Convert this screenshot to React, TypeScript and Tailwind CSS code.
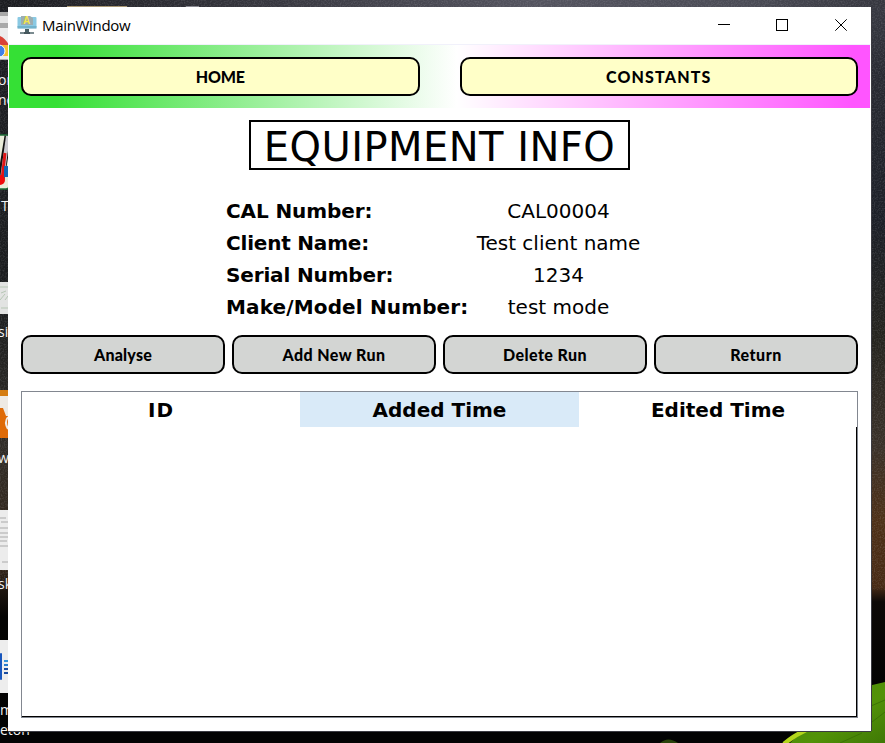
const sans = "font-['DejaVu_Sans','Liberation_Sans',sans-serif]";
const casual = "font-['Comic_Sans_MS','Lato',sans-serif]";

// Night-sky wallpaper with the shortcut column that peeks out behind the window.
function Desktop() {
  return (
    <svg className="absolute inset-0" width="885" height="743" viewBox="0 0 885 743" aria-hidden="true">
      <defs>
        <linearGradient id="topSky" x1="0" x2="1" y1="0" y2="0">
          <stop offset="0" stopColor="#1b1c20" />
          <stop offset="0.3" stopColor="#37373f" />
          <stop offset="0.6" stopColor="#54545f" />
          <stop offset="0.85" stopColor="#4a4b55" />
          <stop offset="1" stopColor="#35363e" />
        </linearGradient>
        <linearGradient id="rightSky" x1="0" x2="0" y1="0" y2="1">
          <stop offset="0" stopColor="#3a3b44" />
          <stop offset="0.1" stopColor="#292b33" />
          <stop offset="0.3" stopColor="#1c1f27" />
          <stop offset="0.45" stopColor="#25241f" />
          <stop offset="0.6" stopColor="#3a3129" />
          <stop offset="0.7" stopColor="#4e3017" />
          <stop offset="0.79" stopColor="#472a15" />
          <stop offset="0.81" stopColor="#0d0907" />
          <stop offset="0.92" stopColor="#030303" />
          <stop offset="1" stopColor="#030303" />
        </linearGradient>
        <linearGradient id="leftSky" x1="0" x2="0" y1="0" y2="1">
          <stop offset="0" stopColor="#1d1e23" />
          <stop offset="0.4" stopColor="#1b1d1f" />
          <stop offset="0.6" stopColor="#302c27" />
          <stop offset="0.76" stopColor="#35261a" />
          <stop offset="0.83" stopColor="#050403" />
          <stop offset="1" stopColor="#030303" />
        </linearGradient>
        <linearGradient id="leaf" x1="0" x2="1" y1="0" y2="1">
          <stop offset="0" stopColor="#4c8a08" />
          <stop offset="0.6" stopColor="#529208" />
          <stop offset="1" stopColor="#3f7806" />
        </linearGradient>
        <filter id="grain" x="0" y="0" width="1" height="1">
          <feTurbulence type="fractalNoise" baseFrequency="0.7" numOctaves="2" />
          <feColorMatrix values="0 0 0 0 0.7  0 0 0 0 0.7  0 0 0 0 0.75  0.9 0 0 0 -0.38" />
        </filter>
      </defs>
      <rect width="885" height="743" fill="#030303" />
      <rect width="12" height="743" fill="url(#leftSky)" />
      <rect x="868" width="17" height="743" fill="url(#rightSky)" />
      <rect width="885" height="8" fill="url(#topSky)" />
      <rect width="885" height="590" filter="url(#grain)" opacity="0.4" />
      <rect x="67" y="6" width="60" height="1" fill="#a99773" />
      <rect x="186" y="6" width="13" height="1" fill="#888890" />
      <path d="M790 743 L806 728 L868 686 L885 682 V743 Z" fill="url(#leaf)" />
      <path d="M871 706L885 700M872 722L885 712M840 743L862 733" stroke="#3c7405" strokeWidth="1" />
      <path d="M784 744 Q793 736 806 730" stroke="#b3d61c" strokeWidth="4.5" fill="none" />
      <path d="M660 743 Q668 736 678 743 Z" fill="#29430b" />

      <rect y="12" width="9" height="48" fill="#a9a9a9" />
      <rect y="16" width="9" height="7" fill="#e6e6e6" />
      <rect y="28" width="9" height="31" fill="#ececec" />
      <path d="M0 36 Q5 38 9 45 H0 Z" fill="#d94236" />
      <rect y="45" width="9" height="11" fill="#f5bd30" />
      <circle cx="-1" cy="51" r="6" fill="#407fe8" stroke="#fff" />

      <rect x="-5" y="135" width="14" height="54" rx="3" fill="#e9ecd9" stroke="#1d7038" strokeWidth="1.5" />
      <path d="M8 136 L1 179" stroke="#111" strokeWidth="7" />
      <path d="M8 136 L2 179" stroke="#c9c9ce" strokeWidth="4" />
      <path d="M5 153 L2 180" stroke="#df1616" strokeWidth="3" />
      <circle cx="0" cy="180" r="5" fill="#f00b0b" />
      <rect x="4" y="166" width="4" height="11" fill="#1167b4" />

      <rect y="282" width="9" height="32" fill="#e2e3e2" />
      <path d="M0 287H8M1 293L6 291M0 300L5 294M5 300L8 296M1 308H8" stroke="#b7c7b5" strokeWidth="1" fill="none" />
      <rect y="390" width="9" height="48" fill="#df6b08" />
      <rect y="390" width="9" height="6" fill="#d57d12" />
      <path d="M0 396H8V416H6L3 408H0Z" fill="#eeeae4" />
      <path d="M8 417Q4 422 8 429" stroke="#eee" strokeWidth="2" fill="none" />

      <rect y="510" width="9" height="60" fill="#ececec" />
      <path d="M0 518H6M1 522H8M0 528H8M0 533H8M0 537H8M0 541H7M0 546H8M2 562H8" stroke="#aaa" strokeWidth="1" />
      <rect y="640" width="9" height="53" fill="#ededed" />
      <rect y="653" width="2" height="27" rx="1" fill="#1856bd" />
      <path d="M4 661H9" stroke="#3492d8" strokeWidth="2" />
      <path d="M4 665H9" stroke="#287dce" strokeWidth="2" />
      <path d="M4 669H9M4 673H9" stroke="#1a4da0" strokeWidth="2" />

      <g fill="#f2f2f2" fontFamily="'Open Sans', 'Noto Sans', sans-serif" fontSize="14">
        <text x="-2" y="85">or</text>
        <text x="-2" y="105">nc</text>
        <text x="1" y="211">T</text>
        <text x="-2" y="337">si</text>
        <text x="-2" y="463">w</text>
        <text x="-2" y="589">sk</text>
        <text x="0" y="715">m</text>
        <text x="0" y="735">eton</text>
      </g>
    </svg>
  );
}

function AppIcon() {
  return (
    <svg width="20" height="20" viewBox="0 0 20 20" className="shrink-0" aria-hidden="true">
      <rect x="0.5" y="2" width="19" height="11" rx="1" fill="#8ac9e3" />
      <rect x="0.5" y="11" width="19" height="2.6" fill="#72b2cb" />
      <path d="M4 1H13L16 3V10H4Z" fill="#9cadb1" />
      <text x="6" y="9" fontSize="10" fontWeight="700" fontFamily="Liberation Sans" fill="#f3e64b">A</text>
      <rect x="8" y="14" width="4" height="3" fill="#4b6267" />
      <rect x="3" y="17" width="14" height="2" fill="#7b8b90" />
      <rect x="7" y="17" width="6" height="2" fill="#46575d" />
    </svg>
  );
}

function TitleBar() {
  return (
    <header className="flex h-[38px] items-start justify-between border-b border-[#f1f1fb] pl-[9px]">
      <div className="flex h-9 items-center gap-[5px]">
        <AppIcon />
        <span className="font-['Open_Sans','Noto_Sans',sans-serif] text-[15px] leading-5 tracking-[-0.32px]">MainWindow</span>
      </div>
      <div className="flex h-9">
        <button aria-label="Minimise" className="flex w-[58px] items-center justify-center">
          <svg width="12" height="12" shapeRendering="crispEdges"><path d="M0 5.5H12" stroke="#000" /></svg>
        </button>
        <button aria-label="Maximise" className="flex w-[58px] items-center justify-center">
          <svg width="12" height="12" shapeRendering="crispEdges"><rect x=".5" y=".5" width="11" height="11" fill="none" stroke="#000" /></svg>
        </button>
        <button aria-label="Close" className="flex w-[60px] items-center justify-center">
          <svg width="12" height="12"><path d="M.3 .3L11.7 11.7M11.7 .3L.3 11.7" stroke="#000" /></svg>
        </button>
      </div>
    </header>
  );
}

const details = [
  { label: "CAL Number:", value: "CAL00004", tracking: "tracking-[-0.1px]" },
  { label: "Client Name:", value: "Test client name", tracking: "tracking-[-0.2px]" },
  { label: "Serial Number:", value: "1234", tracking: "tracking-[-0.15px]" },
  { label: "Make/Model Number:", value: "test mode", tracking: "tracking-[0.14px]" },
];

const tabs = [
  { name: "HOME", tracking: "tracking-[-0.2px]" },
  { name: "CONSTANTS", tracking: "tracking-[1.15px]" },
];

const actions = [
  { name: "Analyse", tracking: "tracking-[0.2px]" },
  { name: "Add New Run", tracking: "tracking-[0.4px]" },
  { name: "Delete Run", tracking: "tracking-[0.4px]" },
  { name: "Return", tracking: "tracking-[0.5px]" },
];

export default function App() {
  return (
    <div className="relative h-[743px] w-[885px] overflow-hidden pl-2 pt-[7px] text-black">
      <Desktop />
      <div className="relative flex h-[724px] w-[863px] flex-col bg-white shadow-[0_1px_0_#3b3b42,1px_0_0_#3b3b42]">
        <TitleBar />
        <nav className="mx-px flex h-[63px] shrink-0 gap-10 bg-[linear-gradient(90deg,#35e035_5.5%,#ffffff_52%,#ff55ff_98%)] px-3 py-3">
          {tabs.map(({ name, tracking }) => (
            <button key={name} className={`${casual} ${tracking} h-[39px] flex-1 rounded-[10px] border-2 border-black bg-[#ffffc8] text-base font-black`}>
              {name}
            </button>
          ))}
        </nav>
        <main className="flex flex-1 flex-col px-[13px] pb-[13px]">
          <h1 className={`${sans} mt-3 ml-[228px] flex h-[50px] w-[381px] items-center justify-center whitespace-nowrap border-2 border-black pt-1 text-[40px] leading-none tracking-[0.45px]`}>
            EQUIPMENT INFO
          </h1>
          <dl className={`${sans} mt-[25px] ml-[205px] text-[20px] leading-8`}>
            {details.map(({ label, value, tracking }) => (
              <div key={label} className="flex h-8">
                <dt className={`${tracking} w-[249px] whitespace-nowrap font-bold`}>{label}</dt>
                <dd className="w-[167px] whitespace-nowrap text-center">{value}</dd>
              </div>
            ))}
          </dl>
          <div className="mt-3 flex gap-[7px]">
            {actions.map(({ name, tracking }) => (
              <button key={name} className={`${casual} ${tracking} h-[39px] flex-1 rounded-[10px] border-2 border-black bg-[#d3d5d3] text-base font-black`}>
                {name}
              </button>
            ))}
          </div>
          <section className="mt-[17px] flex flex-1 flex-col border border-[#828790]">
            <div className={`${sans} grid h-[35px] grid-cols-[278px_279px_1fr] text-center text-[20px] font-bold leading-[37px]`}>
              <div className="h-[35px] tracking-[1px]">ID</div>
              <div className="h-[35px] bg-[#d9eaf8]">Added Time</div>
              <div className="h-[35px]">Edited Time</div>
            </div>
            <div className="flex-1 border-r border-b border-black" />
          </section>
        </main>
      </div>
    </div>
  );
}
